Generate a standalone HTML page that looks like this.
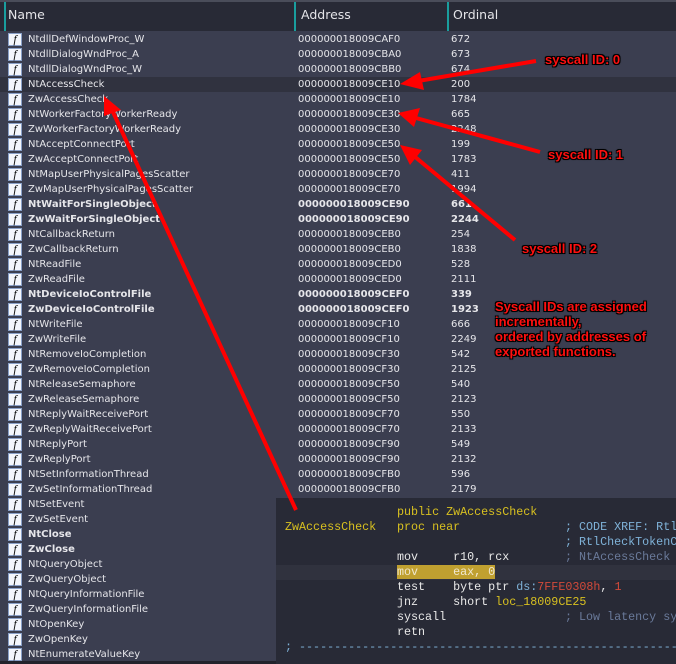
<!DOCTYPE html>
<html><head><meta charset="utf-8"><style>
*{margin:0;padding:0;box-sizing:border-box}
body{width:676px;height:664px;overflow:hidden;background:#3b3e50;font-family:"DejaVu Sans","Liberation Sans",sans-serif;font-size:10px;color:#e6e6ea;position:relative}
.hdr{position:absolute;left:0;top:0;width:676px;height:31px;background:#282a36;border-top:2px solid #4a4d5a}
.hdr span{position:absolute;top:5px;font-size:12.5px;color:#e4e4e8}
.sep{position:absolute;top:2px;width:2px;height:29px;background:#1a9e9e}
.r{position:absolute;left:0;width:676px;height:15px;line-height:15px;white-space:nowrap}
.r i{position:absolute;left:8px;top:1px;width:14px;height:13px;background:#f4f6fc;border:1px solid #8aa0c8;color:#111;font-family:"Liberation Serif",serif;font-size:12px;line-height:11px;text-align:center;font-style:italic;font-weight:normal}
.r .n{position:absolute;left:28px}.r .a{position:absolute;left:298px}.r .o{position:absolute;left:451px}
.b{font-weight:bold}
.sel{background:#30323f}
.code{position:absolute;left:276px;top:498px;width:400px;height:166px;background:#282a36;font-family:"Liberation Mono",monospace;font-size:11.7px;color:#e8e8e8;overflow:hidden}
.code div{position:absolute;height:15px;line-height:15px;white-space:pre}
.y{color:#d8c020}.c{color:#7fb2d8}.cg{color:#6a7a9a}.rd{color:#d24a3a}
.hl{background:#c0a030;color:#f0e8d0}
.lab{position:absolute;font-family:"Liberation Sans",sans-serif;font-weight:bold;font-size:13px;color:#ff1010;text-shadow:-1px -1px 0 #000,1px -1px 0 #000,-1px 1px 0 #000,1px 1px 0 #000,0 0 2px #000;line-height:15px}
</style></head><body>
<div class="hdr"><span style="left:8px">Name</span><span style="left:301px">Address</span><span style="left:453px">Ordinal</span></div>
<div class="sep" style="left:4px"></div><div class="sep" style="left:294px"></div><div class="sep" style="left:447px"></div>

<div class="r" style="top:32px"><i>f</i><span class="n">NtdllDefWindowProc_W</span><span class="a">000000018009CAF0</span><span class="o">672</span></div>
<div class="r" style="top:47px"><i>f</i><span class="n">NtdllDialogWndProc_A</span><span class="a">000000018009CBA0</span><span class="o">673</span></div>
<div class="r" style="top:62px"><i>f</i><span class="n">NtdllDialogWndProc_W</span><span class="a">000000018009CBB0</span><span class="o">674</span></div>
<div class="r sel" style="top:77px"><i>f</i><span class="n">NtAccessCheck</span><span class="a">000000018009CE10</span><span class="o">200</span></div>
<div class="r" style="top:92px"><i>f</i><span class="n">ZwAccessCheck</span><span class="a">000000018009CE10</span><span class="o">1784</span></div>
<div class="r" style="top:107px"><i>f</i><span class="n">NtWorkerFactoryWorkerReady</span><span class="a">000000018009CE30</span><span class="o">665</span></div>
<div class="r" style="top:122px"><i>f</i><span class="n">ZwWorkerFactoryWorkerReady</span><span class="a">000000018009CE30</span><span class="o">2248</span></div>
<div class="r" style="top:137px"><i>f</i><span class="n">NtAcceptConnectPort</span><span class="a">000000018009CE50</span><span class="o">199</span></div>
<div class="r" style="top:152px"><i>f</i><span class="n">ZwAcceptConnectPort</span><span class="a">000000018009CE50</span><span class="o">1783</span></div>
<div class="r" style="top:167px"><i>f</i><span class="n">NtMapUserPhysicalPagesScatter</span><span class="a">000000018009CE70</span><span class="o">411</span></div>
<div class="r" style="top:182px"><i>f</i><span class="n">ZwMapUserPhysicalPagesScatter</span><span class="a">000000018009CE70</span><span class="o">1994</span></div>
<div class="r b" style="top:197px"><i>f</i><span class="n">NtWaitForSingleObject</span><span class="a">000000018009CE90</span><span class="o">661</span></div>
<div class="r b" style="top:212px"><i>f</i><span class="n">ZwWaitForSingleObject</span><span class="a">000000018009CE90</span><span class="o">2244</span></div>
<div class="r" style="top:227px"><i>f</i><span class="n">NtCallbackReturn</span><span class="a">000000018009CEB0</span><span class="o">254</span></div>
<div class="r" style="top:242px"><i>f</i><span class="n">ZwCallbackReturn</span><span class="a">000000018009CEB0</span><span class="o">1838</span></div>
<div class="r" style="top:257px"><i>f</i><span class="n">NtReadFile</span><span class="a">000000018009CED0</span><span class="o">528</span></div>
<div class="r" style="top:272px"><i>f</i><span class="n">ZwReadFile</span><span class="a">000000018009CED0</span><span class="o">2111</span></div>
<div class="r b" style="top:287px"><i>f</i><span class="n">NtDeviceIoControlFile</span><span class="a">000000018009CEF0</span><span class="o">339</span></div>
<div class="r b" style="top:302px"><i>f</i><span class="n">ZwDeviceIoControlFile</span><span class="a">000000018009CEF0</span><span class="o">1923</span></div>
<div class="r" style="top:317px"><i>f</i><span class="n">NtWriteFile</span><span class="a">000000018009CF10</span><span class="o">666</span></div>
<div class="r" style="top:332px"><i>f</i><span class="n">ZwWriteFile</span><span class="a">000000018009CF10</span><span class="o">2249</span></div>
<div class="r" style="top:347px"><i>f</i><span class="n">NtRemoveIoCompletion</span><span class="a">000000018009CF30</span><span class="o">542</span></div>
<div class="r" style="top:362px"><i>f</i><span class="n">ZwRemoveIoCompletion</span><span class="a">000000018009CF30</span><span class="o">2125</span></div>
<div class="r" style="top:377px"><i>f</i><span class="n">NtReleaseSemaphore</span><span class="a">000000018009CF50</span><span class="o">540</span></div>
<div class="r" style="top:392px"><i>f</i><span class="n">ZwReleaseSemaphore</span><span class="a">000000018009CF50</span><span class="o">2123</span></div>
<div class="r" style="top:407px"><i>f</i><span class="n">NtReplyWaitReceivePort</span><span class="a">000000018009CF70</span><span class="o">550</span></div>
<div class="r" style="top:422px"><i>f</i><span class="n">ZwReplyWaitReceivePort</span><span class="a">000000018009CF70</span><span class="o">2133</span></div>
<div class="r" style="top:437px"><i>f</i><span class="n">NtReplyPort</span><span class="a">000000018009CF90</span><span class="o">549</span></div>
<div class="r" style="top:452px"><i>f</i><span class="n">ZwReplyPort</span><span class="a">000000018009CF90</span><span class="o">2132</span></div>
<div class="r" style="top:467px"><i>f</i><span class="n">NtSetInformationThread</span><span class="a">000000018009CFB0</span><span class="o">596</span></div>
<div class="r" style="top:482px"><i>f</i><span class="n">ZwSetInformationThread</span><span class="a">000000018009CFB0</span><span class="o">2179</span></div>
<div class="r" style="top:497px"><i>f</i><span class="n">NtSetEvent</span></div>
<div class="r" style="top:512px"><i>f</i><span class="n">ZwSetEvent</span></div>
<div class="r b" style="top:527px"><i>f</i><span class="n">NtClose</span></div>
<div class="r b" style="top:542px"><i>f</i><span class="n">ZwClose</span></div>
<div class="r" style="top:557px"><i>f</i><span class="n">NtQueryObject</span></div>
<div class="r" style="top:572px"><i>f</i><span class="n">ZwQueryObject</span></div>
<div class="r" style="top:587px"><i>f</i><span class="n">NtQueryInformationFile</span></div>
<div class="r" style="top:602px"><i>f</i><span class="n">ZwQueryInformationFile</span></div>
<div class="r" style="top:617px"><i>f</i><span class="n">NtOpenKey</span></div>
<div class="r" style="top:632px"><i>f</i><span class="n">ZwOpenKey</span></div>
<div class="r" style="top:647px"><i>f</i><span class="n">NtEnumerateValueKey</span></div>
<div style="position:absolute;left:0;top:661px;width:676px;height:3px;background:#22232c"></div>

<div class="code">
<div class="y" style="left:121px;top:7px">public ZwAccessCheck</div>
<div class="y" style="left:9px;top:22px">ZwAccessCheck</div>
<div class="y" style="left:121px;top:22px">proc near</div>
<div class="c" style="left:289px;top:22px">; CODE XREF: Rtl</div>
<div class="c" style="left:289px;top:37px">; RtlCheckTokenC</div>
<div style="left:121px;top:52px">mov     r10, rcx</div>
<div class="cg" style="left:289px;top:52px">; NtAccessCheck</div>
<div style="left:0;top:67px;width:400px;background:#30323e">&nbsp;</div>
<div style="left:121px;top:67px"><span class="hl">mov     eax, 0</span></div>
<div style="left:121px;top:82px">test    byte ptr <span class="c">ds:</span><span class="rd">7FFE0308h</span>, <span class="rd">1</span></div>
<div style="left:121px;top:97px">jnz     short <span class="y">loc_18009CE25</span></div>
<div style="left:121px;top:112px">syscall</div>
<div class="cg" style="left:289px;top:112px">; Low latency sy</div>
<div style="left:121px;top:127px">retn</div>
<div class="c" style="left:9px;top:142px">; -------------------------------------------------------</div>
</div>

<svg width="676" height="664" style="position:absolute;left:0;top:0">
<g stroke="#ff0000" stroke-width="4" fill="#ff0000">
<line x1="536" y1="61" x2="418" y2="81"/><polygon points="400,84 420,72 424,90" stroke="none"/>
<line x1="540" y1="152" x2="416" y2="118"/><polygon points="398,113 420,108 414,127" stroke="none"/>
<line x1="515" y1="240" x2="414" y2="156"/><polygon points="400,145 422,150 410,165" stroke="none"/>
<line x1="296" y1="510" x2="113" y2="112"/><polygon points="104,96 121,110 104,116" stroke="none"/>
</g></svg>
<div class="lab" style="left:545px;top:52px">syscall ID: 0</div>
<div class="lab" style="left:548px;top:147px">syscall ID: 1</div>
<div class="lab" style="left:522px;top:241px">syscall ID: 2</div>
<div class="lab" style="left:495px;top:299px">Syscall IDs are assigned<br>incrementally,<br>ordered by addresses of<br>exported functions.</div>
</body></html>
